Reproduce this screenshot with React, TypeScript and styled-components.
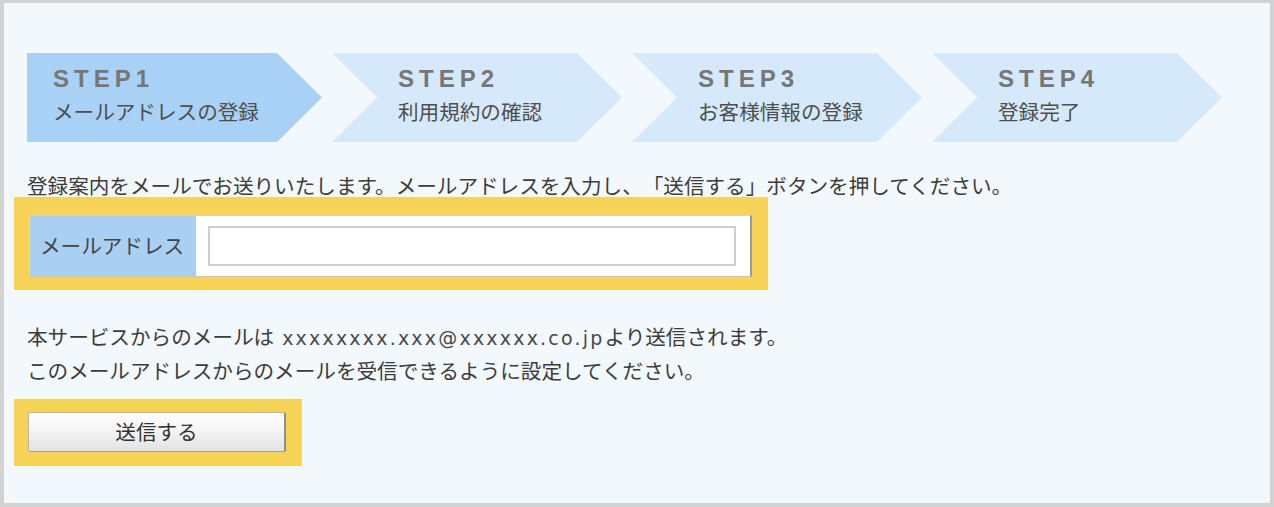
import React from "react";
import styled, { createGlobalStyle } from "styled-components";

const GlobalStyle = createGlobalStyle`
  html, body { margin: 0; padding: 0; }
  body {
    font-family: "Noto Sans CJK JP", "Noto Sans", sans-serif;
    text-spacing-trim: space-all;
  }
`;

const Frame = styled.div`
  box-sizing: border-box;
  width: 1274px;
  height: 507px;
  border: 4px solid #d2d2d2;
  border-top-width: 3px;
  background: #f3f8fc;
  padding: 50px 0 0 23px;
  color: #3c3c3c;
  font-size: 20.6px;
`;

const Steps = styled.ol`
  list-style: none;
  margin: 0;
  padding: 0;
  display: flex;
`;

const Step = styled.li<{ $first?: boolean; $active?: boolean }>`
  box-sizing: border-box;
  width: 300px;
  height: 89px;
  padding: 14px 0 0 ${(p) => (p.$first ? 26 : 71)}px;
  background: ${(p) => (p.$active ? "#a9d0f5" : "#d6e9fa")};
  clip-path: ${(p) =>
    p.$first
      ? "polygon(0 0, 250px 0, 295px 50%, 250px 100%, 0 100%)"
      : "polygon(5px 0, 250px 0, 295px 50%, 250px 100%, 5px 100%, 50px 50%)"};
`;

const StepNo = styled.div`
  font-family: "Liberation Sans", Arial, sans-serif;
  font-weight: bold;
  font-size: 24px;
  line-height: 24px;
  letter-spacing: 5px;
  color: #767676;
`;

const StepName = styled.div`
  margin-top: 7px;
  line-height: 26px;
  color: #4e4e4e;
  white-space: nowrap;
`;

const Intro = styled.p`
  margin: 30px 0 0;
  line-height: 26px;
  white-space: nowrap;
`;

const Highlight = styled.div<{ $width: number }>`
  box-sizing: border-box;
  width: ${(p) => p.$width}px;
  margin-left: -13px;
  background: #f6d257;
`;

const FieldHighlight = styled(Highlight)`
  margin-top: -1px;
  padding: 18px 16px 13px 15px;
`;

const ButtonHighlight = styled(Highlight)`
  margin-top: 13px;
  padding: 13px 16px 14px 14px;
`;

const FieldRow = styled.div`
  display: flex;
  height: 62px;
  box-sizing: border-box;
  background: #ffffff;
  border: 1px solid #d4d4d4;
  border-right: 2px solid #9a9a9a;
  border-bottom: 1px solid #c4c4c4;
`;

const FieldLabel = styled.label`
  box-sizing: border-box;
  width: 166px;
  display: flex;
  align-items: center;
  padding: 0 0 2px 10px;
  background: #a9cff3;
  color: #444;
  white-space: nowrap;
`;

const FieldCell = styled.div`
  padding: 10px 0 0 12px;
`;

const EmailInput = styled.input`
  box-sizing: border-box;
  width: 528px;
  height: 40px;
  margin: 0;
  border: 2px solid #cfcfcf;
  background: #ffffff;
  outline: none;
`;

const Notice = styled.p`
  margin: 30px 0 0;
  line-height: 32px;
  white-space: nowrap;
`;

const Address = styled.span`
  font-family: "DejaVu Sans", sans-serif;
  font-size: 19px;
  letter-spacing: 2.2px;
  margin-left: 8px;
  color: #484848;
`;

const SubmitButton = styled.button`
  box-sizing: border-box;
  width: 258px;
  height: 40px;
  margin: 0;
  padding: 0 0 2px;
  font-family: "Noto Sans CJK JP", "Noto Sans", sans-serif;
  font-size: 20.6px;
  color: #333;
  background: linear-gradient(#fefefe, #f3f3f3 50%, #e2e2e2);
  border: 1px solid #b4b4b4;
  border-right: 2px solid #8e8e8e;
  border-bottom: 1px solid #9c9c9c;
  border-radius: 2px;
  cursor: pointer;
`;

const steps = [
  { no: "STEP1", name: "メールアドレスの登録" },
  { no: "STEP2", name: "利用規約の確認" },
  { no: "STEP3", name: "お客様情報の登録" },
  { no: "STEP4", name: "登録完了" },
];

export default function App() {
  return (
    <>
      <GlobalStyle />
      <Frame>
        <Steps>
          {steps.map((s, i) => (
            <Step key={s.no} $first={i === 0} $active={i === 0}>
              <StepNo>{s.no}</StepNo>
              <StepName>{s.name}</StepName>
            </Step>
          ))}
        </Steps>
        <Intro>
          登録案内をメールでお送りいたします。メールアドレスを入力し、「送信する」ボタンを押してください。
        </Intro>
        <FieldHighlight $width={754}>
          <FieldRow>
            <FieldLabel htmlFor="mail">メールアドレス</FieldLabel>
            <FieldCell>
              <EmailInput id="mail" type="text" />
            </FieldCell>
          </FieldRow>
        </FieldHighlight>
        <Notice>
          本サービスからのメールは<Address>xxxxxxxx.xxx@xxxxxx.co.jp</Address>より送信されます。
          <br />
          このメールアドレスからのメールを受信できるように設定してください。
        </Notice>
        <ButtonHighlight $width={288}>
          <SubmitButton type="button">送信する</SubmitButton>
        </ButtonHighlight>
      </Frame>
    </>
  );
}
